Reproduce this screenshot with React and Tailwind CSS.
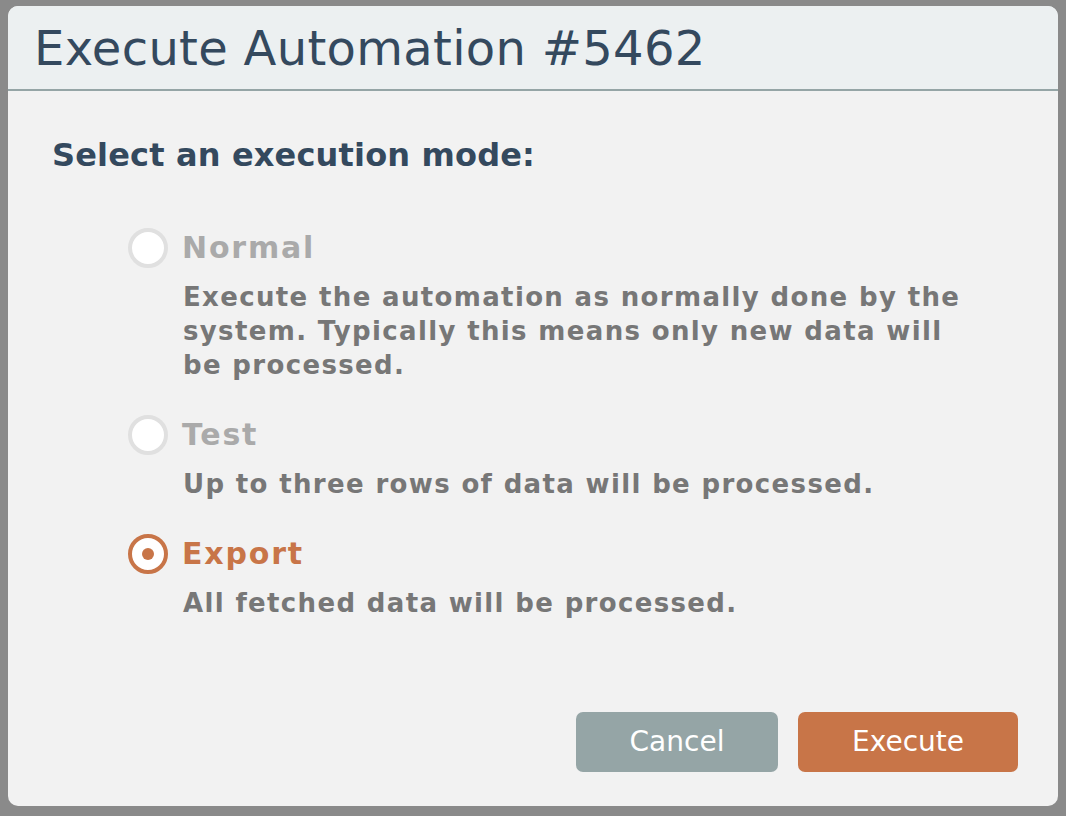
import React from "react";

const font = { fontFamily: '"DejaVu Sans", Verdana, sans-serif' };

function Radio({ checked }) {
  return (
    <div
      className={
        "w-[40px] h-[40px] rounded-full bg-white border-[4px] flex items-center justify-center shrink-0 " +
        (checked ? "border-[#c87548]" : "border-[#e0e0e0]")
      }
    >
      {checked && <div className="w-[12px] h-[12px] rounded-full bg-[#c87548]" />}
    </div>
  );
}

function Option({ label, desc, checked, last }) {
  return (
    <div className={last ? "" : "mb-[33px]"}>
      <div className="flex items-center h-[40px] gap-[14px]">
        <Radio checked={checked} />
        <span
          className={
            "text-[30px] font-bold leading-[40px] tracking-[1.8px] " +
            (checked ? "text-[#c87548]" : "text-[#aaaaaa]")
          }
        >
          {label}
        </span>
      </div>
      <p className="ml-[55px] mt-[12px] max-w-[795px] text-[26px] font-bold leading-[34px] tracking-[1.35px] text-[#777777]">
        {desc}
      </p>
    </div>
  );
}

export default function App() {
  return (
    <div className="w-[1066px] h-[816px] bg-[#8a8a8a] pt-[6px] pl-[8px]" style={font}>
      <div className="w-[1050px] h-[800px] rounded-[10px] bg-[#f2f2f2] flex flex-col overflow-hidden">
        <div className="h-[85px] bg-[#ecf0f1] border-b-2 border-[#95a5a6] pl-[26px] pt-[14px]">
          <h1 className="text-[48px] leading-[56px] tracking-[0.3px] text-[#34495e] font-normal">
            Execute Automation #5462
          </h1>
        </div>
        <div className="flex-1 flex flex-col px-[44px] pt-[44px]">
          <h2 className="text-[32px] leading-[40px] font-bold tracking-[0.16px] text-[#34495e]">
            Select an execution mode:
          </h2>
          <div className="pl-[76px] mt-[53px]">
            <Option
              label="Normal"
              desc="Execute the automation as normally done by the system. Typically this means only new data will be processed."
            />
            <Option label="Test" desc="Up to three rows of data will be processed." />
            <Option label="Export" desc="All fetched data will be processed." checked last />
          </div>
          <div className="flex-1" />
          <div className="flex justify-end gap-[20px] mb-[34px] -mr-[4px]">
            <button className="w-[202px] h-[60px] rounded-[7px] bg-[#95a5a6] text-white text-[28px]">
              Cancel
            </button>
            <button className="w-[220px] h-[60px] rounded-[7px] bg-[#c87548] text-white text-[28px]">
              Execute
            </button>
          </div>
        </div>
      </div>
    </div>
  );
}
